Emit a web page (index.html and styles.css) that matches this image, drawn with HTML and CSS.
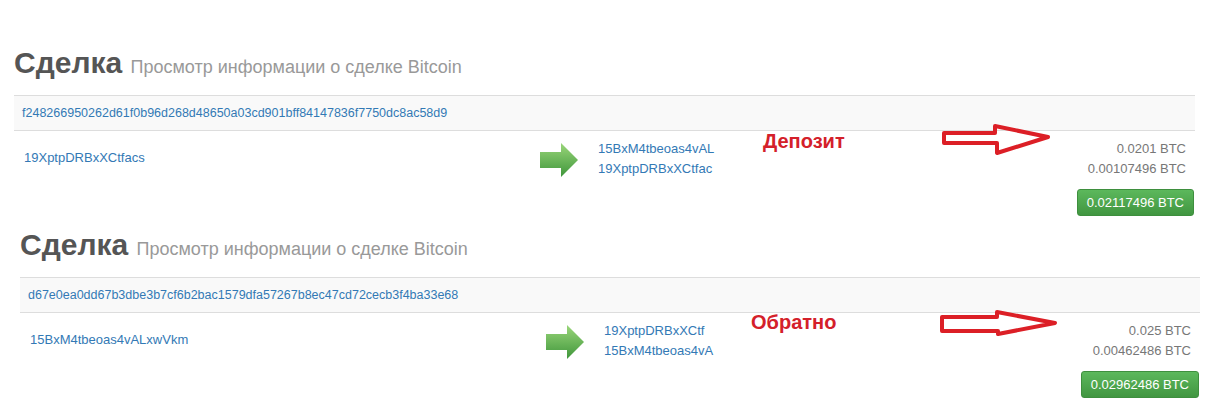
FILE: index.html
```html
<!DOCTYPE html>
<html lang="ru">
<head>
<meta charset="utf-8">
<title>Сделка</title>
<link rel="stylesheet" href="styles.css">
</head>
<body>
<section class="deal deal-first">
  <h1 class="deal-title">Сделка <small class="deal-sub">Просмотр информации о сделке Bitcoin</small></h1>
  <div class="tx">
    <div class="tx-hash"><a href="#">f248266950262d61f0b96d268d48650a03cd901bff84147836f7750dc8ac58d9</a></div>
    <div class="tx-body">
      <div class="tx-in"><a href="#">19XptpDRBxXCtfacs</a></div>
      <div class="tx-mid">
        <svg class="go-arrow" width="38" height="34" viewBox="0 0 38 34"><defs><linearGradient id="g1" x1="0" y1="0" x2="0" y2="1"><stop offset="0" stop-color="#9ad67a"/><stop offset="1" stop-color="#3f963b"/></linearGradient></defs><polygon points="0,9 21,9 21,0 38,17 21,34 21,25 0,25" fill="url(#g1)"/></svg>
        <div class="tx-outs">
          <a href="#">15BxM4tbeoas4vAL</a>
          <a href="#">19XptpDRBxXCtfac</a>
        </div>
      </div>
      <div class="tx-amounts">
        <div class="amt">0.0201 BTC</div>
        <div class="amt">0.00107496 BTC</div>
        <span class="total">0.02117496 BTC</span>
      </div>
    </div>
  </div>
  <span class="note note-1">Депозит</span>
  <svg class="red-arrow red-arrow-1" width="112" height="34" viewBox="0 0 112 34"><polygon points="4,11 55,11 55,4 108,15 57,31 57,21 4,21" fill="none" stroke="#dc1f26" stroke-width="4" stroke-linejoin="round"/></svg>
</section>

<section class="deal deal-second">
  <h1 class="deal-title">Сделка <small class="deal-sub">Просмотр информации о сделке Bitcoin</small></h1>
  <div class="tx">
    <div class="tx-hash"><a href="#">d67e0ea0dd67b3dbe3b7cf6b2bac1579dfa57267b8ec47cd72cecb3f4ba33e68</a></div>
    <div class="tx-body">
      <div class="tx-in"><a href="#">15BxM4tbeoas4vALxwVkm</a></div>
      <div class="tx-mid">
        <svg class="go-arrow" width="38" height="34" viewBox="0 0 38 34"><defs><linearGradient id="g2" x1="0" y1="0" x2="0" y2="1"><stop offset="0" stop-color="#9ad67a"/><stop offset="1" stop-color="#3f963b"/></linearGradient></defs><polygon points="0,9 21,9 21,0 38,17 21,34 21,25 0,25" fill="url(#g2)"/></svg>
        <div class="tx-outs">
          <a href="#">19XptpDRBxXCtf</a>
          <a href="#">15BxM4tbeoas4vA</a>
        </div>
      </div>
      <div class="tx-amounts">
        <div class="amt">0.025 BTC</div>
        <div class="amt">0.00462486 BTC</div>
        <span class="total">0.02962486 BTC</span>
      </div>
    </div>
  </div>
  <span class="note note-2">Обратно</span>
  <svg class="red-arrow red-arrow-2" width="122" height="30" viewBox="0 0 122 30"><polygon points="4,9 59,9 59,4 117,15 60,26 60,23 4,23" fill="none" stroke="#dc1f26" stroke-width="4" stroke-linejoin="round"/></svg>
</section>
</body>
</html>
```

FILE: styles.css
```css
html, body {
  margin: 0;
  padding: 0;
  background: #fff;
}

body {
  font-family: "Liberation Sans", Arial, sans-serif;
  font-size: 13px;
  color: #333;
}

a {
  color: #3379b5;
  text-decoration: none;
}

.deal {
  position: relative;
}

.deal-first {
  margin-left: 14px;
  width: 1181px;
  padding-top: 45px;
}

.deal-second {
  margin-left: 20px;
  width: 1180px;
  margin-top: 3px;
}

.deal-title {
  margin: 0 0 14px;
  height: 36px;
  font-size: 30px;
  line-height: 36px;
  font-weight: bold;
  color: #555;
  white-space: nowrap;
}

.deal-sub {
  font-size: 18px;
  line-height: 18px;
  font-weight: normal;
  color: #999;
}

.tx-hash {
  background: #f9f9f9;
  border-top: 1px solid #ddd;
  border-bottom: 1px solid #ddd;
  padding: 8px 8px;
  line-height: 18px;
  font-size: 12.5px;
}

.tx-body {
  display: grid;
  grid-template-columns: 526px 1fr auto;
  padding-bottom: 8px;
}

.tx-in {
  padding: 17px 0 0 10px;
  line-height: 20px;
}

.tx-mid {
  display: flex;
  align-items: center;
  gap: 20px;
  align-self: start;
  padding-top: 8px;
}

.go-arrow {
  display: block;
  margin-top: 1px;
}

.tx-outs {
  display: flex;
  flex-direction: column;
  line-height: 20px;
}

.tx-amounts {
  display: flex;
  flex-direction: column;
  align-items: flex-end;
  padding: 8px 1px 0 0;
}

.amt {
  color: #777;
  line-height: 20px;
  padding-right: 8px;
}

.total {
  display: block;
  margin-top: 10px;
  height: 27px;
  line-height: 25px;
  padding: 0 9px;
  box-sizing: border-box;
  color: #fff;
  font-size: 13px;
  border: 1px solid #3e8f3e;
  border-radius: 3px;
  background: linear-gradient(#5cb85c, #419641);
}

.note {
  position: absolute;
  font-size: 20px;
  line-height: 22px;
  font-weight: bold;
  color: #d4202a;
}

.note-1 {
  left: 749px;
  top: 130px;
}

.note-2 {
  left: 731px;
  top: 84px;
}

.red-arrow {
  position: absolute;
}

.red-arrow-1 {
  left: 926px;
  top: 122px;
}

.red-arrow-2 {
  left: 918px;
  top: 81px;
}
```
